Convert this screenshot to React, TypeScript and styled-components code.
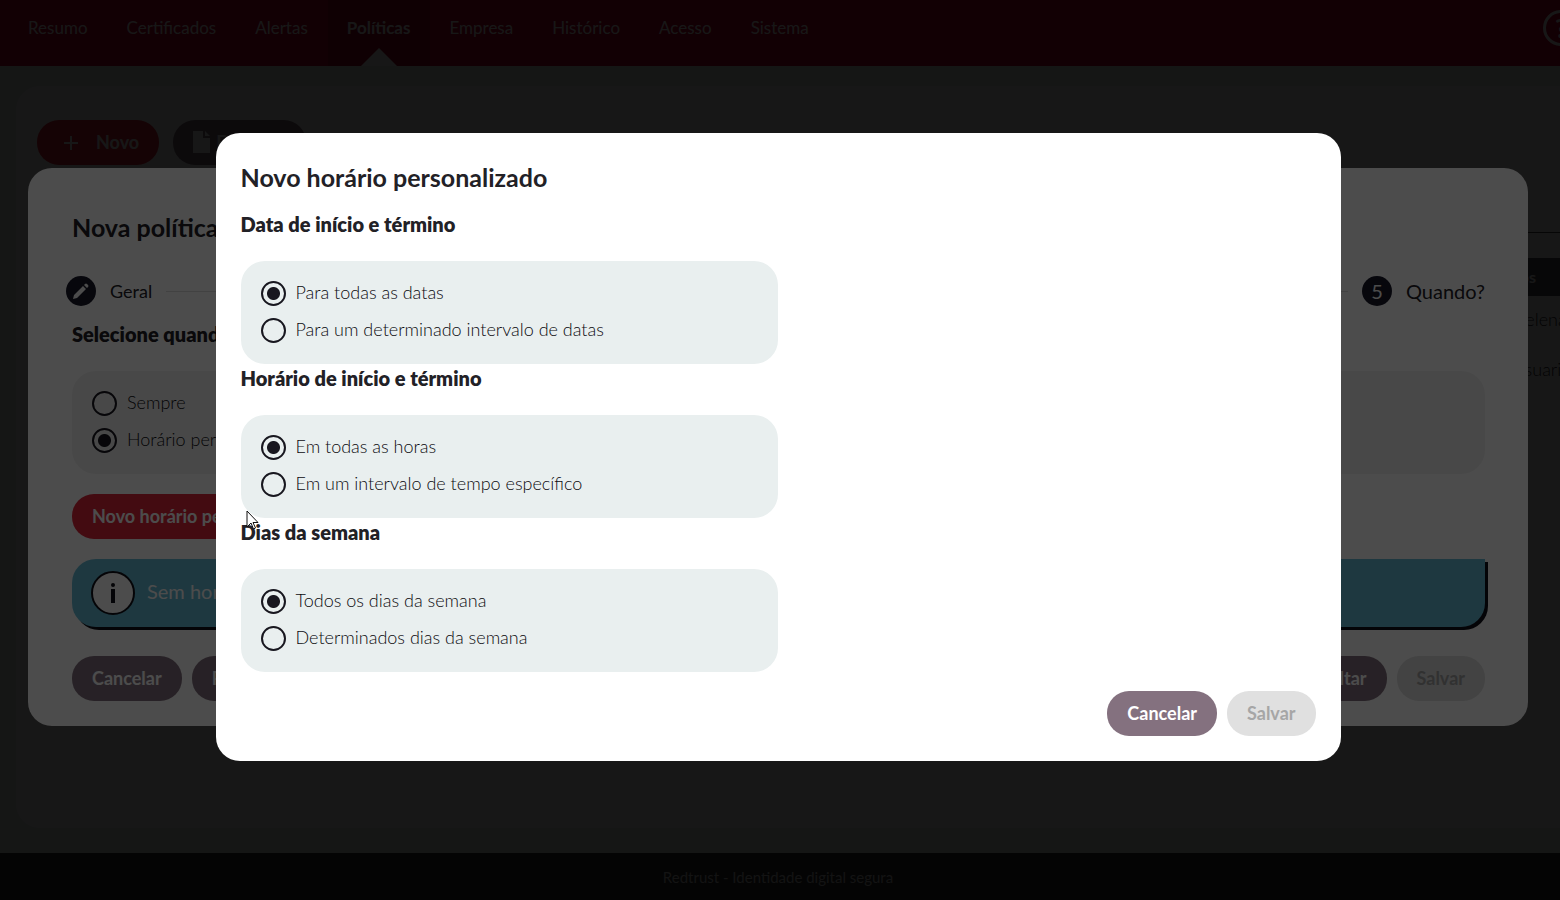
import React, { ReactNode } from "react";
import styled, { createGlobalStyle, css } from "styled-components";

const GlobalStyle = createGlobalStyle`
  *, *::before, *::after { box-sizing: border-box; }
  html, body { margin: 0; height: 100%; }
  body {
    font-family: Lato, "Open Sans", sans-serif;
    font-size: 18px;
    line-height: 24px;
    color: #222126;
    background: #e3ebe9;
    overflow: hidden;
  }
  #root { height: 100%; }
  h1, h2, h3, p { margin: 0; }
`;

const Page = styled.div`
  display: flex;
  flex-direction: column;
  height: 100vh;
  overflow: hidden;
`;

const TopBar = styled.header`
  display: flex;
  flex: none;
  justify-content: space-between;
  height: 66px;
  padding-left: 9px;
  overflow: hidden;
  background: #c8002c;
`;

const Nav = styled.nav`
  display: flex;
`;

const NavLink = styled.a<{ $active?: boolean }>`
  display: flex;
  flex-direction: column;
  align-items: center;
  justify-content: space-between;
  padding: 16px 20px 0 19px;
  color: #fff;
  font-size: 17px;
  text-decoration: none;
  ${(p) =>
    p.$active &&
    css`
      background: #a00024;
      font-weight: 700;
    `}
`;

const Notch = styled.svg`
  display: block;
  width: 36px;
  height: 18px;
`;

const HelpButton = styled.button`
  flex: none;
  width: 36px;
  height: 36px;
  margin: 10px -19px 0 0;
  padding: 0;
  border: 3px solid #fff;
  border-radius: 50%;
  background: none;
  color: #fff;
  font: 700 26px/30px Lato, sans-serif;
`;

const Card = styled.main`
  flex: 1;
  min-height: 0;
  margin: 20px 0 25px 16px;
  padding: 34px 0 0 21px;
  overflow: hidden;
  border-radius: 24px 0 0 24px;
  background: #fff;
`;

const Toolbar = styled.div`
  display: flex;
  gap: 14px;
  padding-bottom: 67px;
  border-bottom: 1px solid #444;
`;

const Pill = styled.button<{ $tone?: "red" | "plum" }>`
  display: inline-flex;
  align-items: center;
  justify-content: center;
  gap: 6px;
  height: 45px;
  padding: 0 20px 2px;
  border: 0;
  border-radius: 22px;
  background: ${(p) => (p.$tone === "red" ? "#e0263a" : "#84717f")};
  color: #fff;
  font: 700 18px/24px Lato, sans-serif;
  white-space: nowrap;
  &:disabled {
    background: #e0e0e0;
    color: #a6a6a6;
  }
`;

const ListTable = styled.table`
  width: 100%;
  margin-top: 25px;
  border-collapse: collapse;
  table-layout: fixed;
  th {
    height: 38px;
    padding: 0;
    background: #55555f;
    color: #fff;
    font-size: 16px;
    text-align: left;
  }
  td {
    height: 50px;
    padding: 0 0 4px 38px;
    font-weight: 300;
    white-space: nowrap;
  }
  th:last-child {
    width: 86px;
  }
`;

const Footer = styled.footer`
  flex: none;
  height: 47px;
  padding: 12px 4px 0 0;
  background: #2e2e2e;
  color: #ccc;
  font-size: 15px;
  text-align: center;
`;

const Backdrop = styled.div`
  position: fixed;
  inset: 0;
  display: flex;
  align-items: center;
  justify-content: center;
  padding: 0 32px 6px 28px;
  background: rgba(0, 0, 0, 0.7);
`;

const PolicyDialog = styled.section`
  width: 100%;
  padding: 40px 43px 25px 44px;
  border-radius: 24px;
  background: #fff;
`;

const ScheduleDialog = styled.section`
  position: relative;
  width: 75%;
  padding: 25px;
  border-radius: 24px;
  background: #fff;
`;

const Title = styled.h1`
  font-size: 25px;
  line-height: 38px;
  font-weight: 700;
`;

const SectionTitle = styled.h2`
  padding: 4px 0 27px;
  font-size: 20px;
  line-height: 20px;
  font-weight: 800;
`;

const Sections = styled.div`
  padding-top: 14px;
`;

const RadioBox = styled.div<{ $half?: boolean }>`
  display: flex;
  flex-direction: column;
  gap: 12px;
  width: ${(p) => (p.$half ? "50%" : "100%")};
  padding: 20px 20px 21px;
  border-radius: 24px;
  background: ${(p) => (p.$half ? "#e9efef" : "#f2f2f2")};
`;

const Option = styled.label`
  display: flex;
  align-items: flex-start;
  gap: 10px;
  height: 25px;
  color: #0c0b10;
  line-height: 22px;
  font-weight: 300;
`;

const Radio = styled.input`
  flex: none;
  appearance: none;
  width: 25px;
  height: 25px;
  margin: 0;
  border: 2px solid #18171f;
  border-radius: 50%;
  &:checked {
    background: radial-gradient(circle, #18171f 6px, transparent 7px);
  }
`;

const Actions = styled.div`
  display: flex;
  gap: 10px;
  margin-top: 19px;
`;

const Spacer = styled.span`
  flex: 1;
`;

const Steps = styled.div`
  display: flex;
  align-items: center;
  gap: 14px;
  margin: 30px 0 14px -6px;
`;

const StepMark = styled.span`
  display: grid;
  place-items: center;
  width: 30px;
  height: 30px;
  border-radius: 50%;
  background: #18182a;
  color: #fff;
  font-size: 20px;
`;

const StepLabel = styled.span<{ $current?: boolean }>`
  font-size: ${(p) => (p.$current ? "20px" : "18px")};
`;

const StepLine = styled.span`
  flex: 1;
  height: 1px;
  background: #ddd;
`;

const Notice = styled.div`
  display: flex;
  align-items: center;
  gap: 12px;
  height: 68px;
  margin: 20px 0 29px;
  padding: 0 19px;
  border-radius: 24px 0 24px 24px;
  background: #66bcd8;
  box-shadow: 3px 3px 0 #101018;
  color: #fff;
  font-size: 20px;
`;

const NoticeText = styled.p`
  padding-bottom: 4px;
`;

const RedRow = styled.div`
  display: flex;
  margin-top: 20px;
`;

const Pointer = styled.svg`
  position: absolute;
  left: 30px;
  top: 377px;
  width: 13px;
  height: 21px;
`;

type ChoiceProps = {
  name: string;
  options: string[];
  selected: number;
  half?: boolean;
};

function Choices({ name, options, selected, half }: ChoiceProps) {
  return (
    <RadioBox $half={half} role="radiogroup">
      {options.map((text, i) => (
        <Option key={text}>
          <Radio type="radio" name={name} defaultChecked={i === selected} />
          {text}
        </Option>
      ))}
    </RadioBox>
  );
}

function ScheduleSection({ title, children }: { title: string; children: ReactNode }) {
  return (
    <div>
      <SectionTitle>{title}</SectionTitle>
      {children}
    </div>
  );
}

const links = [
  "Resumo",
  "Certificados",
  "Alertas",
  "Políticas",
  "Empresa",
  "Histórico",
  "Acesso",
  "Sistema",
];

export default function App() {
  return (
    <>
      <GlobalStyle />
      <Page>
        <TopBar>
          <Nav>
            {links.map((text) => (
              <NavLink key={text} href="#" $active={text === "Políticas"}>
                {text}
                {text === "Políticas" && (
                  <Notch viewBox="0 0 36 18">
                    <path d="M0 18 18 0l18 18z" fill="#fff" />
                  </Notch>
                )}
              </NavLink>
            ))}
          </Nav>
          <HelpButton aria-label="Ajuda">?</HelpButton>
        </TopBar>
        <Card>
          <Toolbar>
            <Pill $tone="red">
              <svg width="33" height="16" viewBox="-5 0 33 16">
                <path d="M9 2v14M2 9h14" stroke="#fff" strokeWidth="2" />
              </svg>
              Novo
            </Pill>
            <Pill>
              <svg width="17" height="22" viewBox="0 0 17 22">
                <path d="M0 0h10v7h7v15H0z M12 0l5 5h-5z" fill="#fff" />
              </svg>
              Exportar
            </Pill>
          </Toolbar>
          <ListTable>
            <thead>
              <tr>
                <th>Nome</th>
                <th>Usuários</th>
              </tr>
            </thead>
            <tbody>
              <tr>
                <td>Geral</td>
                <td>Helena</td>
              </tr>
              <tr>
                <td>Assinatura</td>
                <td>Usuario</td>
              </tr>
            </tbody>
          </ListTable>
        </Card>
        <Footer>Redtrust - Identidade digital segura</Footer>
      </Page>

      <Backdrop>
        <PolicyDialog role="dialog" aria-label="Nova política">
          <Title>Nova política</Title>
          <Steps>
            <StepMark>
              <svg width="18" height="18" viewBox="0 0 18 18" fill="#fff">
                <path d="M1 17l1-4L11 4l3 3-9 9zM12 3l1-1q1-1 2 0l1 1q1 1 0 2l-1 1z" />
              </svg>
            </StepMark>
            <StepLabel>Geral</StepLabel>
            <StepLine />
            <StepMark>5</StepMark>
            <StepLabel $current>Quando?</StepLabel>
          </Steps>
          <SectionTitle as="h3">Selecione quando a política será aplicada</SectionTitle>
          <Choices
            name="quando"
            options={["Sempre", "Horário personalizado"]}
            selected={1}
          />
          <RedRow>
            <Pill $tone="red">Novo horário personalizado</Pill>
          </RedRow>
          <Notice>
            <svg width="44" height="44" viewBox="0 0 44 44">
              <circle cx="22" cy="22" r="21" fill="#fff" stroke="#101018" strokeWidth="2" />
              <circle cx="22" cy="14" r="2" fill="#101018" />
              <path d="M22 18v14" stroke="#101018" strokeWidth="4" />
            </svg>
            <NoticeText>Sem horários</NoticeText>
          </Notice>
          <Actions>
            <Pill>Cancelar</Pill>
            <Pill>Próximo</Pill>
            <Spacer />
            <Pill>Voltar</Pill>
            <Pill disabled>Salvar</Pill>
          </Actions>
        </PolicyDialog>
      </Backdrop>

      <Backdrop>
        <ScheduleDialog role="dialog" aria-modal="true" aria-label="Novo horário personalizado">
          <Title>Novo horário personalizado</Title>
          <Sections>
            <ScheduleSection title="Data de início e término">
              <Choices
                half
                name="datas"
                options={["Para todas as datas", "Para um determinado intervalo de datas"]}
                selected={0}
              />
            </ScheduleSection>
            <ScheduleSection title="Horário de início e término">
              <Choices
                half
                name="horas"
                options={["Em todas as horas", "Em um intervalo de tempo específico"]}
                selected={0}
              />
            </ScheduleSection>
            <ScheduleSection title="Dias da semana">
              <Choices
                half
                name="dias"
                options={["Todos os dias da semana", "Determinados dias da semana"]}
                selected={0}
              />
            </ScheduleSection>
          </Sections>
          <Actions>
            <Spacer />
            <Pill>Cancelar</Pill>
            <Pill disabled>Salvar</Pill>
          </Actions>
          <Pointer viewBox="0 0 13 21">
            <path
              d="M1 1v16l4-4 2.500 6 2-1L7 12.500h5z"
              fill="#fff"
              stroke="#111"
              strokeWidth="1"
            />
          </Pointer>
        </ScheduleDialog>
      </Backdrop>
    </>
  );
}
